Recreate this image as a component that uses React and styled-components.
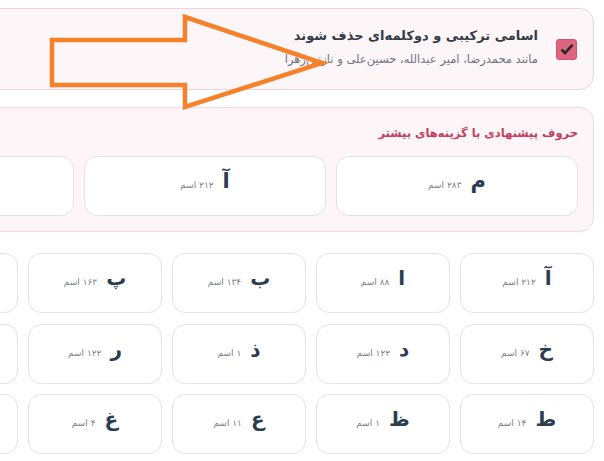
import React from "react";
import styled, { createGlobalStyle } from "styled-components";

const GlobalStyle = createGlobalStyle`
  html, body {
    margin: 0;
    padding: 0;
    background: #ffffff;
  }
  body {
    font-family: "DejaVu Sans", "Noto Sans", sans-serif;
  }
`;

const Page = styled.div`
  position: relative;
  width: 604px;
  height: 461px;
  overflow: hidden;
  direction: rtl;
  padding: 8px 10px 0 10px;
  box-sizing: border-box;
`;

const Content = styled.div`
  width: 854px;
`;

const OptionCard = styled.label`
  display: flex;
  align-items: center;
  gap: 18px;
  height: 82px;
  box-sizing: border-box;
  padding: 0 16px 4px;
  background: #fdf6f9;
  border: 1px solid #f0d2dd;
  border-radius: 14px;
`;

const CheckBox = styled.span`
  flex: none;
  width: 21px;
  height: 21px;
  margin-top: 4px;
  box-sizing: border-box;
  border-radius: 3px;
  background: #e0647f;
  border: 1px solid #cf5673;
  display: flex;
  align-items: center;
  justify-content: center;
`;

const OptionText = styled.div`
  display: flex;
  flex-direction: column;
  gap: 6px;
`;

const OptionTitle = styled.div`
  font-size: 13px;
  font-weight: bold;
  color: #333a44;
  line-height: 18px;
`;

const OptionHint = styled.div`
  font-size: 11.5px;
  color: #6f737a;
  line-height: 16px;
`;

const SuggestBox = styled.section`
  margin-top: 17px;
  padding: 15px;
  background: #fdf5f8;
  border: 1px solid #f5d9e3;
  border-radius: 14px;
`;

const SuggestTitle = styled.h3`
  margin: 0 0 13px;
  font-size: 11.5px;
  line-height: 20px;
  font-weight: bold;
  color: #c43e5e;
`;

const SuggestRow = styled.div`
  display: grid;
  grid-template-columns: repeat(3, 242px);
  gap: 10px;
`;

const LetterGrid = styled.div`
  margin-top: 21px;
  display: grid;
  grid-template-columns: repeat(6, 1fr);
  column-gap: 10px;
  row-gap: 10.5px;
`;

const LetterCard = styled.div`
  height: 60px;
  box-sizing: border-box;
  background: #ffffff;
  border: 1px solid #e1e3e6;
  border-radius: 13px;
  display: flex;
  align-items: baseline;
  justify-content: center;
  gap: 9px;
  padding-top: 12px;
`;

const Letter = styled.span`
  font-size: ${(p) => (p.$big ? "21px" : "20px")};
  font-weight: bold;
  color: #2c3d52;
  line-height: 24px;
`;

const Count = styled.span`
  font-size: 9px;
  color: #7b7f86;
`;

const Annotation = styled.svg`
  position: absolute;
  top: 0;
  left: 0;
  pointer-events: none;
`;

const suggestions = [
  { l: "م", c: "۲۸۳" },
  { l: "آ", c: "۲۱۲" },
  { l: "پ", c: "۱۶۳" },
];

const letters = [
  { l: "آ", c: "۲۱۲" },
  { l: "ا", c: "۸۸" },
  { l: "ب", c: "۱۳۴" },
  { l: "پ", c: "۱۶۳" },
  { l: "ت", c: "۷۹" },
  { l: "ث", c: "۵" },
  { l: "خ", c: "۶۷" },
  { l: "د", c: "۱۲۲" },
  { l: "ذ", c: "۱" },
  { l: "ر", c: "۱۲۲" },
  { l: "ز", c: "۹۰" },
  { l: "ژ", c: "۶" },
  { l: "ط", c: "۱۴" },
  { l: "ظ", c: "۱" },
  { l: "ع", c: "۱۱" },
  { l: "غ", c: "۴" },
  { l: "ف", c: "۸۷" },
  { l: "ق", c: "۱۲" },
];

function App() {
  return (
    <>
      <GlobalStyle />
      <Page>
        <Content>
          <OptionCard>
            <CheckBox>
              <svg width="14" height="12" viewBox="0 0 14 12">
                <path d="M1.5 6.5 L5 10 L12.5 1.8" fill="none" stroke="#2a2a2e" strokeWidth="2.6" />
              </svg>
            </CheckBox>
            <OptionText>
              <OptionTitle>اسامی ترکیبی و دوکلمه‌ای حذف شوند</OptionTitle>
              <OptionHint>مانند محمدرضا، امیر عبدالله، حسین‌علی و نازنین‌زهرا</OptionHint>
            </OptionText>
          </OptionCard>

          <SuggestBox>
            <SuggestTitle>حروف پیشنهادی با گزینه‌های بیشتر</SuggestTitle>
            <SuggestRow>
              {suggestions.map((s) => (
                <LetterCard key={s.l}>
                  <Letter $big>{s.l}</Letter>
                  <Count>{s.c} اسم</Count>
                </LetterCard>
              ))}
            </SuggestRow>
          </SuggestBox>

          <LetterGrid>
            {letters.map((s) => (
              <LetterCard key={s.l}>
                <Letter>{s.l}</Letter>
                <Count>{s.c} اسم</Count>
              </LetterCard>
            ))}
          </LetterGrid>
        </Content>

        {/* orange arrow drawn over the screenshot */}
        <Annotation width="604" height="461" viewBox="0 0 604 461">
          <polygon
            points="52,40 185,40 185,17 322,63 185,107 185,85 52,85"
            fill="none"
            stroke="#f7812b"
            strokeWidth="4.5"
          />
        </Annotation>
      </Page>
    </>
  );
}

export default App;
